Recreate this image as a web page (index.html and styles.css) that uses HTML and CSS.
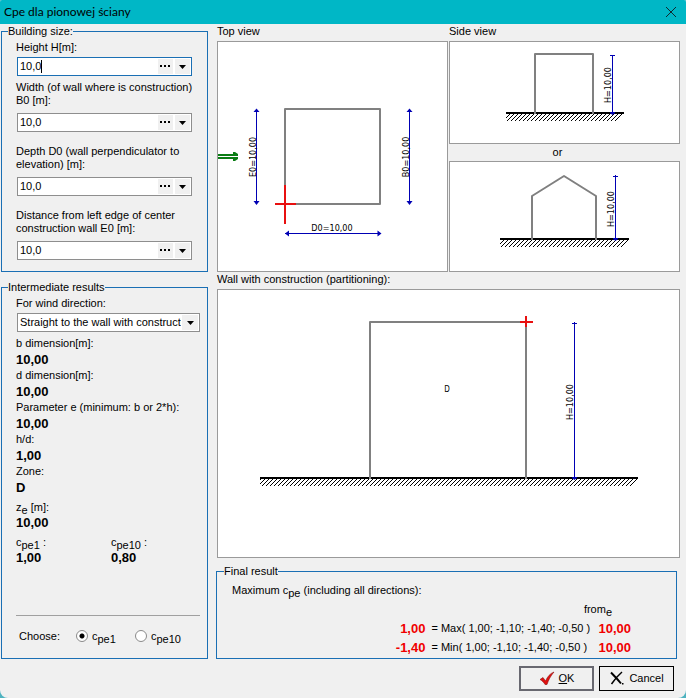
FILE: index.html
```html
<!DOCTYPE html>
<html lang="en">
<head>
<meta charset="utf-8">
<title>Cpe dla pionowej ściany</title>
<link rel="stylesheet" href="styles.css">
</head>
<body>
<div class="window">
  <header class="titlebar">
    <h1 class="titlebar__text" lang="pl">Cpe dla pionowej ściany</h1>
    <button class="titlebar__close" type="button" aria-label="Close">
      <svg width="12" height="12" viewBox="0 0 12 12"><path d="M1 1l10 10M11 1L1 11"/></svg>
    </button>
  </header>

  <form class="content">
    <div class="side">
      <fieldset class="group group--size">
        <legend>Building size:</legend>
        <div class="field field--short">
          <label for="height">Height H[m]:</label>
          <div class="combo combo--active">
            <input id="height" type="text" value="10,0">
            <button type="button" aria-label="Calculator"><svg width="11" height="3" viewBox="0 0 11 3"><path d="M0 0h2v2H0zM4 0h2v2H4zM8 0h2v2H8z"/></svg></button>
            <button type="button" aria-label="Open list"><svg width="7" height="4" viewBox="0 0 7 4"><path d="M0 0h7L3.5 4z"/></svg></button>
          </div>
        </div>
        <div class="field">
          <label for="width">Width (of wall where is construction) B0 [m]:</label>
          <div class="combo">
            <input id="width" type="text" value="10,0">
            <button type="button" aria-label="Calculator"><svg width="11" height="3" viewBox="0 0 11 3"><path d="M0 0h2v2H0zM4 0h2v2H4zM8 0h2v2H8z"/></svg></button>
            <button type="button" aria-label="Open list"><svg width="7" height="4" viewBox="0 0 7 4"><path d="M0 0h7L3.5 4z"/></svg></button>
          </div>
        </div>
        <div class="field">
          <label for="depth">Depth D0 (wall perpendiculator to elevation) [m]:</label>
          <div class="combo">
            <input id="depth" type="text" value="10,0">
            <button type="button" aria-label="Calculator"><svg width="11" height="3" viewBox="0 0 11 3"><path d="M0 0h2v2H0zM4 0h2v2H4zM8 0h2v2H8z"/></svg></button>
            <button type="button" aria-label="Open list"><svg width="7" height="4" viewBox="0 0 7 4"><path d="M0 0h7L3.5 4z"/></svg></button>
          </div>
        </div>
        <div class="field">
          <label for="distance">Distance from left edge of center construction wall E0 [m]:</label>
          <div class="combo">
            <input id="distance" type="text" value="10,0">
            <button type="button" aria-label="Calculator"><svg width="11" height="3" viewBox="0 0 11 3"><path d="M0 0h2v2H0zM4 0h2v2H4zM8 0h2v2H8z"/></svg></button>
            <button type="button" aria-label="Open list"><svg width="7" height="4" viewBox="0 0 7 4"><path d="M0 0h7L3.5 4z"/></svg></button>
          </div>
        </div>
      </fieldset>

      <fieldset class="group group--results">
        <legend>Intermediate results</legend>
        <label for="wind">For wind direction:</label>
        <div class="select">
          <select id="wind"><option>Straight to the wall with construction</option></select>
          <svg class="select__arrow" width="7" height="4" viewBox="0 0 7 4"><path d="M0 0h7L3.5 4z"/></svg>
        </div>
        <dl class="results">
          <dt>b dimension[m]:</dt><dd>10,00</dd>
          <dt>d dimension[m]:</dt><dd>10,00</dd>
          <dt>Parameter e (minimum: b or 2*h):</dt><dd>10,00</dd>
          <dt>h/d:</dt><dd>1,00</dd>
          <dt>Zone:</dt><dd>D</dd>
        </dl>
        <dl class="results results--sub">
          <dt>z<sub>e</sub> [m]:</dt><dd>10,00</dd>
        </dl>
        <div class="pair">
          <dl class="results results--sub"><dt>c<sub>pe1</sub> :</dt><dd>1,00</dd></dl>
          <dl class="results results--sub"><dt>c<sub>pe10</sub> :</dt><dd>0,80</dd></dl>
        </div>
        <hr class="rule">
        <div class="choose" role="radiogroup" aria-labelledby="choose-label">
          <span class="choose__title" id="choose-label">Choose:</span>
          <label class="choose__item"><input type="radio" name="cpe" checked><span>c<sub>pe1</sub></span></label>
          <label class="choose__item"><input type="radio" name="cpe"><span>c<sub>pe10</sub></span></label>
        </div>
      </fieldset>
    </div>

    <div class="views">
      <div class="views__top">
        <section class="view">
          <h2 class="view__title">Top view</h2>
          <svg class="canvas" viewBox="218 42 229 229" role="img" aria-label="Top view">
            <defs>
              <pattern id="hatch" width="4" height="4" patternUnits="userSpaceOnUse"><path class="hatch-line" d="M-1 1l2-2M0 4l4-4M3 5l2-2"/></pattern>
            </defs>
            <path class="wall" d="M285 109h95v95h-95z"/>
            <path class="mark" d="M285 185v39M275 204h21"/>
            <path class="wind" d="M218 154h15v-2h2l3 2v2h-20zM218 157h20v2l-3 2h-2v-2h-15z"/>
            <path class="dim" d="M256.500 109v95M409.500 109v95M285 233.500h96"/>
            <path class="tip" d="M256.500 108.500l3 3.500h-6zM256.500 205l3-4h-6zM409.500 108.500l3 3.500h-6zM409.500 205l3-4h-6zM285 233.500l4-3v6zM381.500 233.500l-4-3v6z"/>
            <text class="note" transform="translate(256 157) rotate(-90)">E0=10,00</text>
            <text class="note" transform="translate(409 157) rotate(-90)">B0=10,00</text>
            <text class="note" x="332" y="231">D0=10,00</text>
          </svg>
        </section>
        <section class="view">
          <h2 class="view__title">Side view</h2>
          <svg class="canvas" viewBox="450 42 229 101" role="img" aria-label="Side view, flat roof">
            <path class="ground" d="M506 113h118"/>
            <path class="soil" d="M506 114h118l-7 7H506z"/>
            <path class="wall" d="M535 114V54h58v60"/>
            <path class="dim" d="M612.500 55v58M610 55.500h5"/>
            <path class="tip" d="M610 112h5v1l-2.500 2-2.500-2z"/>
            <text class="note" transform="translate(611 85) rotate(-90)">H=10,00</text>
          </svg>
          <p class="view__or">or</p>
          <svg class="canvas" viewBox="450 162 229 109" role="img" aria-label="Side view, gable roof">
            <path class="ground" d="M500 239h129"/>
            <path class="soil" d="M500 240h129l-7 7H500z"/>
            <path class="wall" d="M532 240v-44l32-20 32 20v44"/>
            <path class="dim" d="M615.500 175v64M613 176.500h5"/>
            <path class="tip" d="M613 238h5v1l-2.500 2-2.500-2z"/>
            <text class="note" transform="translate(614 209) rotate(-90)">H=10,00</text>
          </svg>
        </section>
      </div>

      <section class="view">
        <h2 class="view__title">Wall with construction (partitioning):</h2>
        <svg class="canvas" viewBox="218 290 461 267" role="img" aria-label="Wall with construction">
          <path class="ground" d="M260 478h378"/>
          <path class="soil" d="M260 479h378l-7 7H260z"/>
          <path class="wall" d="M370 479V322h156v157"/>
          <path class="mark" d="M526 316v11M520 322h13"/>
          <path class="dim" d="M574.500 322v156M572 323.500h5"/>
          <path class="tip" d="M572 477h5v1l-2.500 2-2.500-2z"/>
          <text class="note" transform="translate(573 402) rotate(-90)">H=10,00</text>
          <text class="note note--zone" x="447" y="392">D</text>
        </svg>
      </section>

      <fieldset class="group group--final">
        <legend>Final result</legend>
        <p class="final__text">Maximum c<sub>pe</sub> (including all directions):</p>
        <table class="final">
          <thead><tr><td></td><th colspan="2" scope="col">from<sub>e</sub></th></tr></thead>
          <tbody>
            <tr><td class="final__value">1,00</td><td class="final__formula">= Max( 1,00; -1,10; -1,40; -0,50 )</td><td class="final__from">10,00</td></tr>
            <tr><td class="final__value">-1,40</td><td class="final__formula">= Min( 1,00; -1,10; -1,40; -0,50 )</td><td class="final__from">10,00</td></tr>
          </tbody>
        </table>
      </fieldset>
    </div>
  </form>

  <footer class="actions">
    <button class="button button--default" type="button">
      <svg width="16" height="16" viewBox="0 0 16 16"><path fill="#e01010" stroke="#8c1010" stroke-width=".6" d="M1 8.500l3-2 2.500 3.500C8.500 5.500 11 2.500 15 1c-3.500 4-5.500 8-7 12.500H6C5 11.500 3 9.500 1 8.500z"/></svg>
      <span><u>O</u>K</span>
    </button>
    <button class="button" type="button">
      <svg width="16" height="16" viewBox="0 0 16 16"><path fill="none" stroke="#000" stroke-width="2" d="M2 1.500c3 3 6 6 10 11"/><path fill="none" stroke="#000" stroke-width="1.500" d="M13 1C9 4.500 5.500 8.500 2.500 13"/><path d="M13 12h1.500v1.500H13z"/></svg>
      <span>Cancel</span>
    </button>
  </footer>
</div>
</body>
</html>
```
FILE: styles.css
```css
* { box-sizing: border-box; }

html { background: #4fb3c0; }

body {
  margin: 0;
  color: #000;
  font: 11px/13px "Liberation Sans", Arial, sans-serif;
}

input, select, button { margin: 0; font: inherit; color: inherit; }

h1, h2, p, dl, dd { margin: 0; font-size: inherit; font-weight: normal; }

sub { position: relative; top: 3px; font-size: inherit; line-height: 0; vertical-align: baseline; }

.window {
  display: flex;
  flex-direction: column;
  min-height: 100vh;
  background: #f0f0f0;
  border-radius: 2px 2px 8px 8px;
  overflow: hidden;
}

.titlebar {
  display: flex;
  align-items: center;
  justify-content: space-between;
  height: 24px;
  padding: 0 9px 0 4px;
  background: #00b7c6;
}

.titlebar__text { font: 12px/16px Lato, "Open Sans", sans-serif; }

.titlebar__close {
  display: flex;
  padding: 0;
  border: 0;
  background: none;
}

.titlebar__close svg { fill: none; stroke: #102a30; stroke-width: 1; }

.content {
  display: grid;
  grid-template-columns: 207px 1fr;
  gap: 9px;
  padding: 1px 6px 0 1px;
}

.side { display: flex; flex-direction: column; gap: 9px; }

.group {
  min-width: 0;
  margin: 0;
  padding: 3px 7px 0 14px;
  border: 1px solid #1a6fb4;
}

.group legend { margin-left: -8px; padding: 0; }

.group--size { padding-bottom: 11px; }

.group--results { flex: 1; }

.field { display: flex; flex-direction: column; gap: 6px; margin-bottom: 13px; }
.field:last-child { margin-bottom: 0; }
.field--short { gap: 3px; margin-bottom: 5px; }

.combo {
  display: flex;
  gap: 2px;
  height: 19px;
  margin: 0 8px 0 1px;
  padding: 1px;
  border: 1px solid #8e8e8e;
  background: #fff;
}

.combo--active { border-color: #1a6fb4; }

.combo input {
  flex: 1;
  min-width: 0;
  padding: 0 1px;
  border: 0;
  outline: 0;
  background: none;
}

.combo--active input {
  background: linear-gradient(#000, #000) 22px 1px / 1px 13px no-repeat;
}

.combo button {
  display: flex;
  align-items: center;
  justify-content: center;
  width: 15px;
  padding: 0;
  border: 0;
  background: #f0f0f0;
}

.select { position: relative; margin: 3px 0 4px 1px; }

.select select {
  display: block;
  width: 100%;
  height: 19px;
  padding: 0 18px 0 2px;
  border: 1px solid #8e8e8e;
  border-radius: 0;
  appearance: none;
  background: linear-gradient(#f0f0f0, #f0f0f0) right 1px center / 16px 15px no-repeat #fff;
}

.select__arrow { position: absolute; top: 8px; right: 6px; pointer-events: none; }

.results dt { line-height: 15px; }
.results dd { font-weight: bold; font-size: 13px; line-height: 17px; }

.results--sub { margin-top: 4px; }
.results--sub dt { line-height: 14px; }

.pair { display: grid; grid-template-columns: 95px 1fr; }

.rule {
  height: 1px;
  margin: 49px 0 0;
  border: 0;
  background: #a0a0a0;
}

.choose {
  display: flex;
  align-items: center;
  height: 40px;
  padding-left: 3px;
}

.choose__title { width: 57px; }
.choose__item { display: flex; align-items: center; gap: 4px; width: 59px; }

.choose input {
  flex: none;
  width: 12px;
  height: 12px;
  border: 1px solid #8a8a8a;
  border-radius: 50%;
  appearance: none;
  background: #fff;
}

.choose input:checked { background: radial-gradient(circle, #000 2px, #fff 3px); }

.views { min-width: 0; }

.views__top {
  display: grid;
  grid-template-columns: 1fr 1fr;
  gap: 1px;
  margin-bottom: 1px;
}

.view__title { margin-bottom: 3px; }

.view__or { padding: 2px 0; text-align: center; margin-right: 14px; }

.canvas {
  display: block;
  width: 100%;
  border: 1px solid #9a9a9a;
  background: #fff;
}

.wall { fill: none; stroke: #808080; stroke-width: 2; stroke-linejoin: round; }
.mark { fill: none; stroke: #e81010; stroke-width: 2; }
.wind { fill: #0a7d14; }
.dim { fill: none; stroke: #0000b4; }
.tip { fill: #0000b4; }
.ground { stroke: #000; stroke-width: 2; }
.soil { fill: url(#hatch); }
.hatch-line { stroke: #000; stroke-width: 1; }
.note { font: 9px "DejaVu Sans Condensed", "DejaVu Sans", sans-serif; text-anchor: middle; }
.note--zone { font-size: 8px; }

.group--final {
  margin: 7px 3px 0 -1px;
  padding: 6px 45px 1px 15px;
}

.final__text { margin-bottom: 3px; }

.final { margin-left: auto; border-collapse: collapse; }
.final td, .final th { padding: 0; height: 19px; font-weight: normal; white-space: nowrap; }
.final th { padding-right: 19px; text-align: right; }
.final .final__value, .final .final__from { color: #f00000; font-size: 13px; font-weight: bold; text-align: right; }
.final .final__formula { width: 173px; padding-left: 6px; }

.actions {
  display: flex;
  justify-content: flex-end;
  gap: 5px;
  padding: 7px 12px 7px 0;
}

.button {
  display: flex;
  align-items: center;
  justify-content: center;
  gap: 4px;
  width: 75px;
  height: 25px;
  padding: 0;
  border: 1px solid #000;
  background: #f0f0f0;
}

.button--default { border: 2px solid #686870; }
```
